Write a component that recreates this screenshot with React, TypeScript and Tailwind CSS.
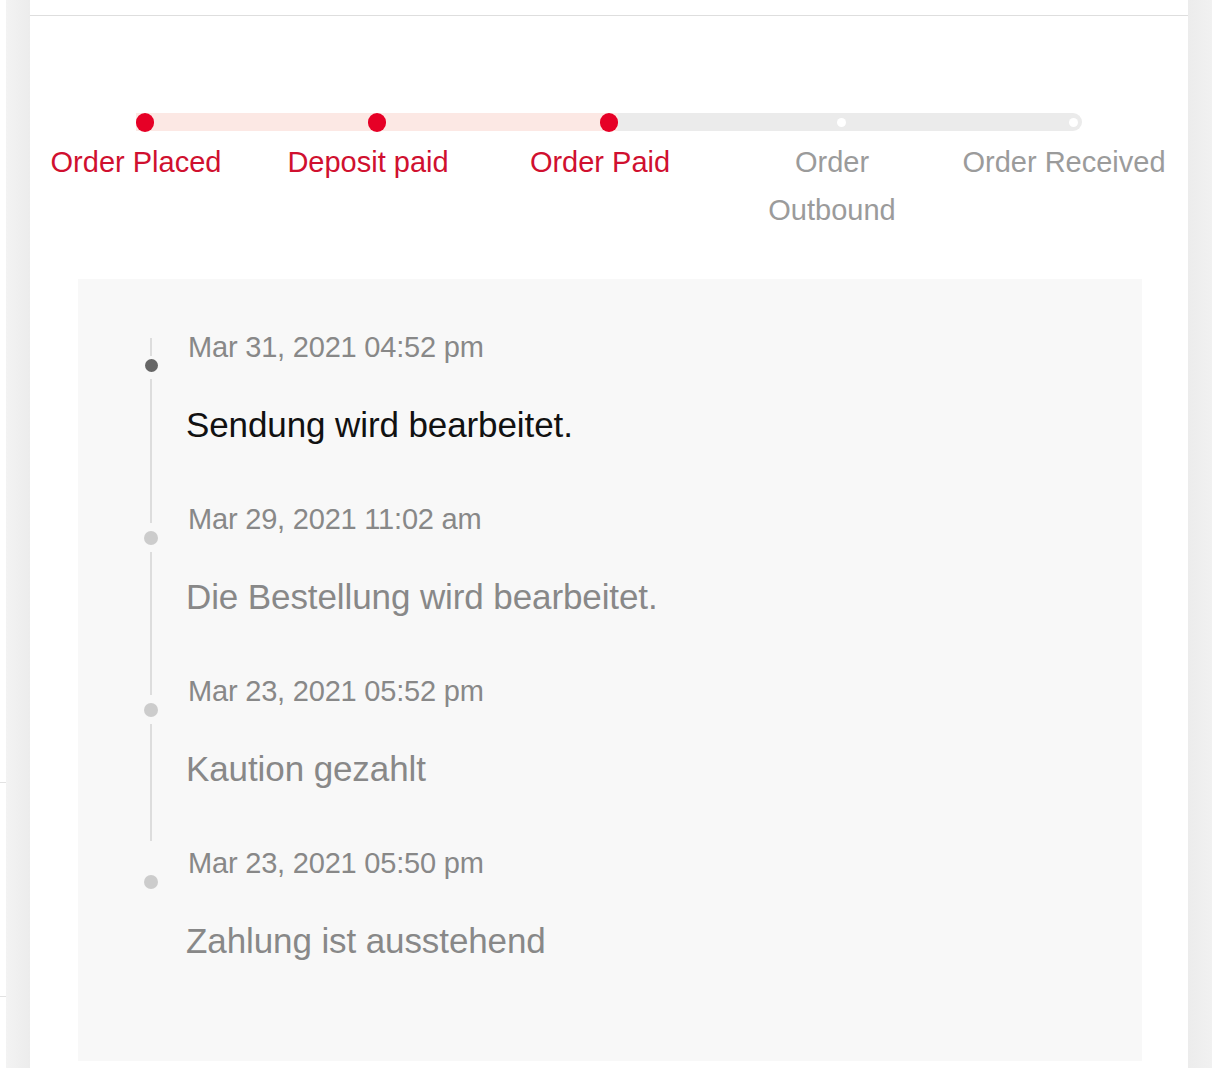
import React from "react";

type Step = { label: React.ReactNode; done: boolean };

const steps: Step[] = [
  { label: "Order Placed", done: true },
  { label: "Deposit paid", done: true },
  { label: "Order Paid", done: true },
  { label: <>Order<br />Outbound</>, done: false },
  { label: "Order Received", done: false },
];

type Entry = {
  date: string;
  text: string;
  current?: boolean;
  top: "stub" | "full" | "none";
  bottom: "full" | "short" | "none";
  last?: boolean;
};

const entries: Entry[] = [
  { date: "Mar 31, 2021 04:52 pm", text: "Sendung wird bearbeitet.", current: true, top: "stub", bottom: "full" },
  { date: "Mar 29, 2021 11:02 am", text: "Die Bestellung wird bearbeitet.", top: "full", bottom: "full" },
  { date: "Mar 23, 2021 05:52 pm", text: "Kaution gezahlt", top: "full", bottom: "short" },
  { date: "Mar 23, 2021 05:50 pm", text: "Zahlung ist ausstehend", top: "none", bottom: "none", last: true },
];

function TimelineItem({ entry }: { entry: Entry }) {
  return (
    <div className="flex">
      {/* rail */}
      <div className="w-[14px] flex flex-col items-center">
        <div className="h-[30px] w-full flex flex-col items-center">
          {entry.top === "stub" && <div className="mt-[9px] h-[18px] w-[2px] bg-[#dddddd]" />}
          {entry.top === "full" && <div className="h-[22px] w-[2px] bg-[#dddddd]" />}
        </div>
        <div
          className={
            entry.current
              ? "w-[13px] h-[13px] rounded-full bg-[#666666]"
              : "w-[14px] h-[14px] rounded-full bg-[#cccccc]"
          }
        />
        {entry.bottom !== "none" && (
          <div
            className={
              entry.bottom === "full"
                ? "mt-[7px] flex-1 w-[2px] bg-[#dddddd]"
                : "mt-[7px] mb-[4px] flex-1 w-[2px] bg-[#dddddd]"
            }
          />
        )}
      </div>

      {/* content */}
      <div className={entry.last ? "ml-[30px] pb-[100px]" : "ml-[30px] pb-[56px]"}>
        <div className="text-[29px] leading-[36px] text-[#888888] tracking-[-0.2px]">{entry.date}</div>
        <div
          className={
            entry.current
              ? "mt-[40px] -ml-[2px] text-[35px] leading-[40px] tracking-[-0.1px] text-[#111111]"
              : "mt-[40px] -ml-[2px] text-[35px] leading-[40px] tracking-[-0.1px] text-[#888888]"
          }
        >
          {entry.text}
        </div>
      </div>
    </div>
  );
}

export default function App() {
  return (
    <div
      className="w-[1212px] h-[1068px] flex bg-[#f1f1f1] overflow-hidden"
      style={{ fontFamily: '"Liberation Sans", Arial, sans-serif' }}
    >
      {/* sliver of page behind */}
      <div className="w-[6px] bg-white flex flex-col">
        <div className="h-[782px]" />
        <div className="h-[1px] bg-[#e2e2e2]" />
        <div className="h-[213px]" />
        <div className="h-[1px] bg-[#e2e2e2]" />
      </div>
      <div className="w-[24px] bg-gradient-to-r from-[#f3f3f3] to-[#ececec]" />

      {/* card */}
      <div className="w-[1158px] bg-white flex flex-col">
        <div className="h-[16px] border-b border-[#dedede]" />

        {/* progress */}
        <div className="pl-[106px] mt-[97px]">
          <div className="relative w-[946px] h-[18px] rounded-full bg-[#ebebeb]">
            <div className="absolute left-0 top-0 h-full w-[482px] bg-[#fce8e4]" />
            <div className="relative h-full flex justify-between">
              {steps.map((s, i) => (
                <div key={i} className="w-[18px] h-[18px] flex items-center justify-center">
                  {s.done ? (
                    <div className="w-[19px] h-[19px] rounded-full bg-[#e60026]" />
                  ) : (
                    <div className="w-[9px] h-[9px] rounded-full bg-white" />
                  )}
                </div>
              ))}
            </div>
          </div>
        </div>

        <div className="pl-[1px] mt-[7px] flex gap-[22px]">
          {steps.map((s, i) => (
            <div
              key={i}
              className={
                s.done
                  ? "w-[210px] shrink-0 text-center text-[29px] leading-[48px] text-[#d0102f] whitespace-nowrap"
                  : "w-[210px] shrink-0 text-center text-[29px] leading-[48px] text-[#9b9b9b] whitespace-nowrap"
              }
            >
              {s.label}
            </div>
          ))}
        </div>

        {/* history */}
        <div className="ml-[48px] mt-[45px] w-[1064px] bg-[#f8f8f8] pt-[50px] pl-[66px]">
          {entries.map((e, i) => (
            <TimelineItem key={i} entry={e} />
          ))}
        </div>
      </div>

      <div className="w-[24px] bg-gradient-to-r from-[#ececec] to-[#f1f1f1]" />
    </div>
  );
}
